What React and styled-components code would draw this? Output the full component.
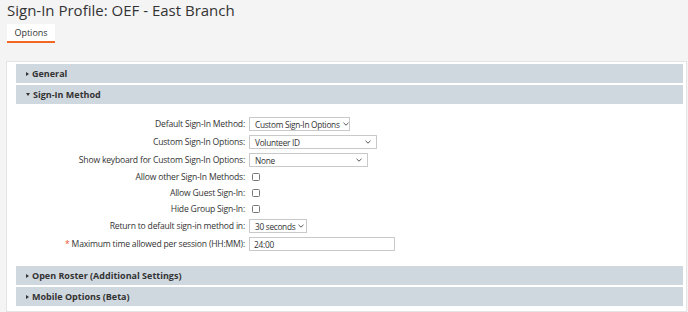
import React from "react"
import styled, { createGlobalStyle } from "styled-components"

const GlobalStyle = createGlobalStyle`
    html, body {
        margin: 0;
        padding: 0;
        background: #f4f4f4;
        font-family: "Open Sans", "Liberation Sans", sans-serif;
        color: #333;
    }
`

const Page = styled.div`
    width: 688px;
    height: 312px;
    overflow: hidden;
    display: flex;
    flex-direction: column;
`

const Title = styled.h1`
    margin: 0;
    padding: 0 0 0 7px;
    height: 21px;
    font-size: 15px;
    font-weight: 400;
    line-height: 21px;
    color: #333;
`

const Tabs = styled.div`
    display: flex;
    padding: 3px 0 0 7px;
    height: 19px;
`

const Tab = styled.div`
    width: 48px;
    height: 17px;
    background: #fff;
    border-bottom: 2px solid ${p => (p.$active ? "#f26722" : "transparent")};
    font-size: 9px;
    line-height: 17px;
    text-align: center;
    color: #333;
`

const Panel = styled.div`
    margin: 18px 1px 0 6px;
    flex: 1;
    background: #fff;
    border: 1px solid #e4e4e4;
    padding: 2px 3px 0 9px;
    display: flex;
    flex-direction: column;
    gap: 2px;
`

const Bar = styled.div`
    height: 19px;
    background: #d0d8df;
    display: flex;
    align-items: center;
    gap: 3px;
    padding-left: 10px;
    font-size: 9px;
    font-weight: 700;
    color: #333;
`

const Caret = styled.span`
    width: 0;
    height: 0;
    border-style: solid;
    ${p => p.$open
        ? "border-width: 3px 2.5px 0 2.5px; border-color: #333 transparent transparent transparent;"
        : "border-width: 2.5px 0 2.5px 3px; border-color: transparent transparent transparent #333;"}
`

const Form = styled.div`
    display: grid;
    grid-template-columns: 229px auto;
    column-gap: 4px;
    row-gap: 4px;
    padding: 11px 0 13px;
    font-size: 8.6px;
    letter-spacing: -0.2px;
`

const Label = styled.div`
    height: ${p => (p.$short ? "12px" : "14px")};
    display: flex;
    align-items: center;
    justify-content: flex-end;
    white-space: nowrap;
`

const Required = styled.span`
    color: #e8562a;
    margin-right: 2px;
`

const Cell = styled.div`
    height: ${p => (p.$short ? "12px" : "14px")};
    display: flex;
    align-items: center;
`

const Select = styled.div`
    box-sizing: border-box;
    width: ${p => p.$w}px;
    height: 14px;
    border: 1px solid #c9c9c9;
    background: #fff;
    display: flex;
    align-items: center;
    justify-content: space-between;
    gap: 3px;
    padding: 0 5px 0 5px;
    font-size: 8.3px;
    letter-spacing: -0.3px;
    white-space: nowrap;
`

const Input = styled.div`
    box-sizing: border-box;
    width: 146px;
    height: 14px;
    border: 1px solid #c9c9c9;
    background: #fff;
    display: flex;
    align-items: center;
    padding-left: 4px;
    font-size: 8.3px;
`

const Check = styled.span`
    box-sizing: border-box;
    width: 8px;
    height: 8px;
    margin-left: 3px;
    border: 1px solid #777;
    border-radius: 1.5px;
    background: #fff;
`

const Chevron = () => (
    <svg width="6" height="4" viewBox="0 0 6 4" style={{ flexShrink: 0 }}>
        <path d="M0.5 0.8 L3 3.2 L5.5 0.8" fill="none" stroke="#444" strokeWidth="0.9" />
    </svg>
)

const rows = [
    { label: "Default Sign-In Method:", select: "Custom Sign-In Options", w: 101 },
    { label: "Custom Sign-In Options:", select: "Volunteer ID", w: 128 },
    { label: "Show keyboard for Custom Sign-In Options:", select: "None", w: 119 },
    { label: "Allow other Sign-In Methods:", check: true },
    { label: "Allow Guest Sign-In:", check: true },
    { label: "Hide Group Sign-In:", check: true },
    { label: "Return to default sign-in method in:", select: "30 seconds", w: 58 },
    { label: "Maximum time allowed per session (HH:MM):", input: "24:00", required: true },
]

const App = () => {
    return (
        <Page>
            <GlobalStyle />
            <Title>Sign-In Profile: OEF - East Branch</Title>
            <Tabs>
                <Tab $active>Options</Tab>
            </Tabs>
            <Panel>
                <Bar><Caret />General</Bar>
                <Bar><Caret $open />Sign-In Method</Bar>
                <Form>
                    {rows.map(r => (
                        <React.Fragment key={r.label}>
                            <Label $short={r.check}>
                                {r.required && <Required>*</Required>}
                                {r.label}
                            </Label>
                            <Cell $short={r.check}>
                                {r.select && <Select $w={r.w}>{r.select}<Chevron /></Select>}
                                {r.check && <Check />}
                                {r.input && <Input>{r.input}</Input>}
                            </Cell>
                        </React.Fragment>
                    ))}
                </Form>
                <Bar><Caret />Open Roster (Additional Settings)</Bar>
                <Bar><Caret />Mobile Options (Beta)</Bar>
            </Panel>
        </Page>
    )
}

export default App
